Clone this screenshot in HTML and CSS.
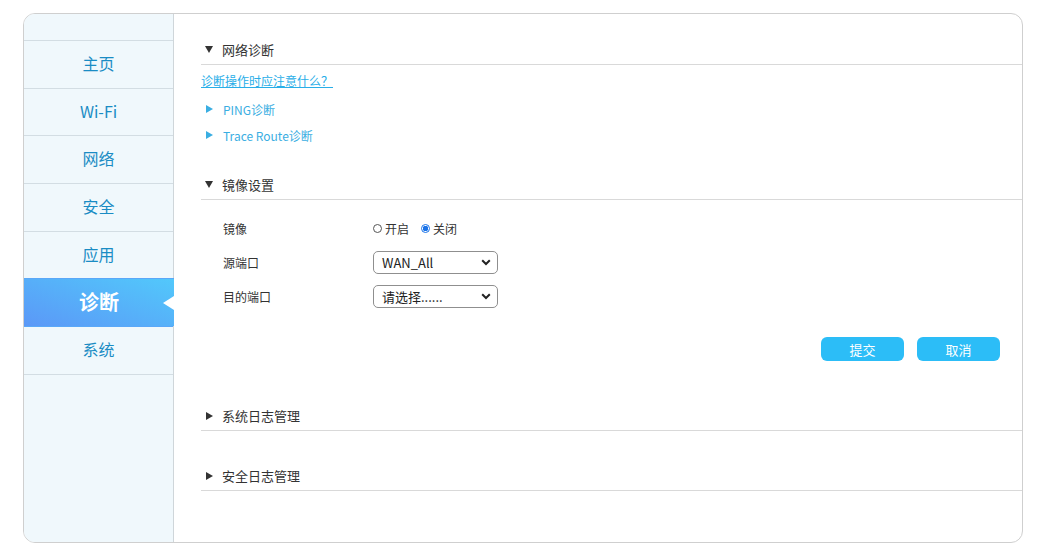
FILE: index.html
```html
<!doctype html>
<html lang="zh-CN">
  <head>
    <meta charset="utf-8" />
    <title>诊断</title>
    <link rel="stylesheet" href="styles.css">
  </head>

  <body>
    <div class="panel">
      <div class="sidebar">
        <div class="menu-item">主页</div>
        <div class="menu-item">Wi-Fi</div>
        <div class="menu-item">网络</div>
        <div class="menu-item">安全</div>
        <div class="menu-item">应用</div>
        <div class="menu-item active">诊断<span class="notch"></span></div>
        <div class="menu-item last">系统</div>
      </div>

      <div class="content">
        <div class="section-head open"><span class="arrow"></span>网络诊断</div>
        <a class="help-link" href="#">诊断操作时应注意什么？</a>
        <div class="sub-list">
          <div class="sub-item"><span class="arrow"></span>PING诊断</div>
          <div class="sub-item"><span class="arrow"></span>Trace Route诊断</div>
        </div>

        <div class="section-head open mirror"><span class="arrow"></span>镜像设置</div>
        <div class="form">
          <div class="form-row">
            <span class="label">镜像</span>
            <label class="radio"><input type="radio" name="mirror">开启</label>
            <label class="radio"><input type="radio" name="mirror" checked>关闭</label>
          </div>
          <div class="form-row">
            <span class="label">源端口</span>
            <div class="select"><span>WAN_All</span>
              <svg width="10" height="7" viewBox="0 0 10 7"><path d="M1.2 1.3 L5 5 L8.8 1.3" fill="none" stroke="#222" stroke-width="2"/></svg>
            </div>
          </div>
          <div class="form-row">
            <span class="label">目的端口</span>
            <div class="select"><span>请选择......</span>
              <svg width="10" height="7" viewBox="0 0 10 7"><path d="M1.2 1.3 L5 5 L8.8 1.3" fill="none" stroke="#222" stroke-width="2"/></svg>
            </div>
          </div>
        </div>
        <div class="actions">
          <button class="btn">提交</button>
          <button class="btn">取消</button>
        </div>

        <div class="section-head closed syslog"><span class="arrow"></span>系统日志管理</div>
        <div class="section-head closed seclog"><span class="arrow"></span>安全日志管理</div>
      </div>
    </div>
  </body>
</html>
```

FILE: styles.css
```css
body {
  margin: 0;
  background-color: #fff;
  font-family: "Noto Sans CJK SC", "Noto Sans", sans-serif;
  color: #333;
}

.panel {
  display: flex;
  box-sizing: border-box;
  width: 1000px;
  height: 530px;
  margin: 13px 0 0 23px;
  border: 1px solid #cfcfcf;
  border-radius: 12px;
  overflow: hidden;
}

/* left menu */
.sidebar {
  width: 149px;
  flex-shrink: 0;
  background-color: #f0f8fc;
  border-right: 1px solid #cfd6da;
  padding-top: 26px;
}

.menu-item {
  position: relative;
  height: 46.7px;
  line-height: 45px;
  border-top: 1px solid #d3dde3;
  text-align: center;
  font-size: 16px;
  color: #1a8cc4;
}

.menu-item.last {
  border-bottom: 1px solid #d3dde3;
}

.menu-item.active {
  margin-right: -1px;
  border-top-color: #5aa8f8;
  background: linear-gradient(20deg, #5b98f7 0%, #52c8fb 100%);
  color: #fff;
  font-size: 20px;
  font-weight: bold;
}

.menu-item.active + .menu-item {
  border-top-color: #5aa8f8;
}

.notch {
  position: absolute;
  right: 0;
  top: 17px;
  width: 0;
  height: 0;
  border-top: 7px solid transparent;
  border-bottom: 7px solid transparent;
  border-right: 11px solid #fff;
}

/* right content */
.content {
  flex: 1;
  padding-top: 21px;
  padding-left: 27px;
}

.section-head {
  display: flex;
  align-items: center;
  height: 29px;
  border-bottom: 1px solid #d9d9d9;
  font-size: 13px;
  color: #333;
}

.section-head .arrow {
  width: 0;
  height: 0;
  margin: 0 9px 0 4px;
}

.section-head.open .arrow {
  border-left: 4px solid transparent;
  border-right: 4px solid transparent;
  border-top: 7px solid #333;
}

.section-head.closed .arrow {
  margin-left: 5px;
  margin-right: 9px;
  border-top: 4.5px solid transparent;
  border-bottom: 4.5px solid transparent;
  border-left: 7px solid #333;
}

.help-link {
  display: inline-block;
  margin-top: 6px;
  line-height: 20px;
  font-size: 12px;
  color: #28aee8;
  text-decoration: underline;
}

.sub-list {
  margin-top: 5px;
}

.sub-item {
  display: flex;
  align-items: center;
  height: 26px;
  font-size: 12px;
  color: #3aaee2;
}

.sub-item .arrow {
  width: 0;
  height: 0;
  margin: 0 10px 0 5px;
  border-top: 4.5px solid transparent;
  border-bottom: 4.5px solid transparent;
  border-left: 7px solid #3aaee2;
}

.section-head.mirror {
  margin-top: 22px;
}

.form {
  margin-top: 11px;
  padding-left: 22px;
}

.form-row {
  display: flex;
  align-items: center;
  height: 34px;
  font-size: 12px;
  color: #333;
}

.label {
  width: 150px;
}

.radio {
  display: flex;
  align-items: center;
  margin-right: 12px;
}

.radio input {
  appearance: none;
  box-sizing: border-box;
  width: 9px;
  height: 9px;
  margin: 0 3px 0 0;
  border: 1px solid #555;
  border-radius: 50%;
}

.radio input:checked {
  border-color: #1a73e8;
  background: radial-gradient(circle, #1a73e8 0 2.6px, #fff 3px);
}

.select {
  display: flex;
  align-items: center;
  justify-content: space-between;
  box-sizing: border-box;
  width: 125px;
  height: 23px;
  padding: 0 6px 0 8px;
  border: 1px solid #8f8f8f;
  border-radius: 5px;
  font-size: 13px;
  color: #222;
}

.actions {
  display: flex;
  justify-content: flex-end;
  gap: 13px;
  margin-top: 24px;
  padding-right: 22px;
}

.btn {
  width: 83px;
  height: 24px;
  border: none;
  border-radius: 6px;
  background-color: #2cbdf7;
  color: #fff;
  font-family: inherit;
  font-size: 13px;
}

.section-head.syslog {
  margin-top: 40px;
}

.section-head.seclog {
  margin-top: 30px;
}
```
